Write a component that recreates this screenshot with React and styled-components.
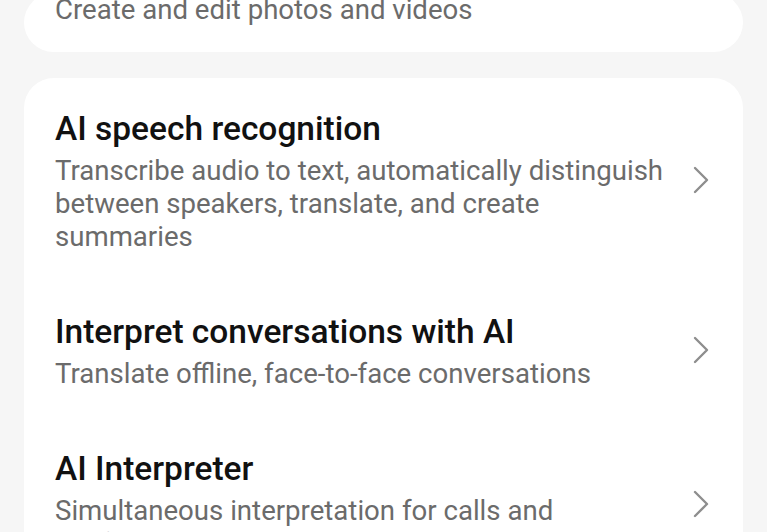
import React from "react";
import styled, { createGlobalStyle } from "styled-components";

const Global = createGlobalStyle`
  html, body {
    margin: 0;
    padding: 0;
    background: #f6f6f6;
    font-family: Roboto, "Noto Sans", "Liberation Sans", sans-serif;
    -webkit-font-smoothing: antialiased;
  }
  #root { overflow: hidden; height: 532px; }
`;

const Page = styled.div`
  display: flex;
  flex-direction: column;
  gap: 26px;
  padding: 0 24px;
  margin-top: -7px;
`;

const Card = styled.div`
  background: #ffffff;
  border-radius: 30px;
  padding: ${(p) => p.$pad || "1px 0"};
  display: flex;
  flex-direction: column;
`;

const Row = styled.div`
  display: flex;
  align-items: center;
  gap: 16px;
  padding: 28px 33px 29px 31px;
`;

const TextCol = styled.div`
  flex: 1;
  display: flex;
  flex-direction: column;
  gap: 3px;
  min-width: 0;
`;

const Title = styled.div`
  font-size: 33.5px;
  line-height: 44px;
  font-weight: 500;
  color: #111111;
`;

const Desc = styled.div`
  font-size: 27.6px;
  line-height: 33px;
  font-weight: 400;
  color: #6b6b6b;
`;

const TopDesc = styled(Desc)`
  padding: 0 31px;
`;

const Chevron = () => (
  <svg width="18" height="28" viewBox="0 0 18 28" fill="none">
    <path d="M3 2 L15 14 L3 26" stroke="#8e8e8e" strokeWidth="2.4" strokeLinecap="round" strokeLinejoin="round" />
  </svg>
);

const items = [
  {
    title: "AI speech recognition",
    desc: "Transcribe audio to text, automatically distinguish between speakers, translate, and create summaries",
  },
  {
    title: "Interpret conversations with AI",
    desc: "Translate offline, face-to-face conversations",
  },
  {
    title: "AI Interpreter",
    desc: "Simultaneous interpretation for calls and conferences",
  },
];

export default function App() {
  return (
    <>
      <Global />
      <Page>
        <Card $pad="0 0 26px">
          <TopDesc>Create and edit photos and videos</TopDesc>
        </Card>
        <Card>
          {items.map((it) => (
            <Row key={it.title}>
              <TextCol>
                <Title>{it.title}</Title>
                <Desc>{it.desc}</Desc>
              </TextCol>
              <Chevron />
            </Row>
          ))}
        </Card>
      </Page>
    </>
  );
}
